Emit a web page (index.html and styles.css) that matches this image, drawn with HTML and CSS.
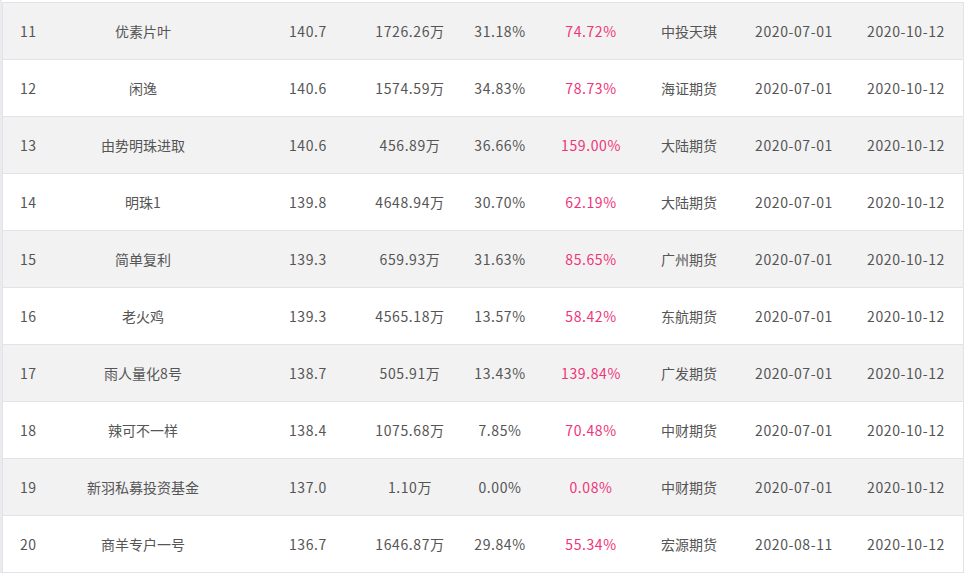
FILE: index.html
```html
<!DOCTYPE html>
<html lang="zh-CN">
<head>
<meta charset="utf-8">
<title>排行</title>
<link rel="stylesheet" href="styles.css">
</head>
<body>
<div class="frame">
  <div class="table">
    <div class="row alt"><span class="c rank">11</span><span class="c">优素片叶</span><span class="c">140.7</span><span class="c">1726.26万</span><span class="c">31.18%</span><span class="c red">74.72%</span><span class="c">中投天琪</span><span class="c">2020-07-01</span><span class="c">2020-10-12</span></div>
    <div class="row"><span class="c rank">12</span><span class="c">闲逸</span><span class="c">140.6</span><span class="c">1574.59万</span><span class="c">34.83%</span><span class="c red">78.73%</span><span class="c">海证期货</span><span class="c">2020-07-01</span><span class="c">2020-10-12</span></div>
    <div class="row alt"><span class="c rank">13</span><span class="c">由势明珠进取</span><span class="c">140.6</span><span class="c">456.89万</span><span class="c">36.66%</span><span class="c red">159.00%</span><span class="c">大陆期货</span><span class="c">2020-07-01</span><span class="c">2020-10-12</span></div>
    <div class="row"><span class="c rank">14</span><span class="c">明珠1</span><span class="c">139.8</span><span class="c">4648.94万</span><span class="c">30.70%</span><span class="c red">62.19%</span><span class="c">大陆期货</span><span class="c">2020-07-01</span><span class="c">2020-10-12</span></div>
    <div class="row alt"><span class="c rank">15</span><span class="c">简单复利</span><span class="c">139.3</span><span class="c">659.93万</span><span class="c">31.63%</span><span class="c red">85.65%</span><span class="c">广州期货</span><span class="c">2020-07-01</span><span class="c">2020-10-12</span></div>
    <div class="row"><span class="c rank">16</span><span class="c">老火鸡</span><span class="c">139.3</span><span class="c">4565.18万</span><span class="c">13.57%</span><span class="c red">58.42%</span><span class="c">东航期货</span><span class="c">2020-07-01</span><span class="c">2020-10-12</span></div>
    <div class="row alt"><span class="c rank">17</span><span class="c">雨人量化8号</span><span class="c">138.7</span><span class="c">505.91万</span><span class="c">13.43%</span><span class="c red">139.84%</span><span class="c">广发期货</span><span class="c">2020-07-01</span><span class="c">2020-10-12</span></div>
    <div class="row"><span class="c rank">18</span><span class="c">辣可不一样</span><span class="c">138.4</span><span class="c">1075.68万</span><span class="c">7.85%</span><span class="c red">70.48%</span><span class="c">中财期货</span><span class="c">2020-07-01</span><span class="c">2020-10-12</span></div>
    <div class="row alt"><span class="c rank">19</span><span class="c">新羽私募投资基金</span><span class="c">137.0</span><span class="c">1.10万</span><span class="c">0.00%</span><span class="c red">0.08%</span><span class="c">中财期货</span><span class="c">2020-07-01</span><span class="c">2020-10-12</span></div>
    <div class="row"><span class="c rank">20</span><span class="c">商羊专户一号</span><span class="c">136.7</span><span class="c">1646.87万</span><span class="c">29.84%</span><span class="c red">55.34%</span><span class="c">宏源期货</span><span class="c">2020-08-11</span><span class="c">2020-10-12</span></div>
  </div>
</div>
</body>
</html>
```
FILE: styles.css
```css
html, body {
  margin: 0;
  padding: 0;
  background: #ffffff;
}
.frame {
  padding: 2px 2px 0 2px;
  background: linear-gradient(to right, #ebebee 0, #ebebee 2px, #ffffff 2px);
}
.table {
  border-top: 1px solid #e2e2e8;
  border-left: 1px solid #e2e2e8;
  border-right: 1px solid #e2e2e8;
  font-family: "Noto Sans CJK SC", "Open Sans", sans-serif;
  font-size: 14px;
  color: #555555;
}
.row {
  display: grid;
  grid-template-columns: 30px 220px 110px 94px 86px 96px 100px 110px 114px;
  height: 56px;
  align-items: center;
  border-bottom: 1px solid #e2e2e8;
  background: #ffffff;
}
.row.alt {
  background: #f2f2f2;
}
.c {
  text-align: center;
  white-space: nowrap;
  line-height: 20px;
  margin-top: -1px;
}
.c:nth-child(1),
.c:nth-child(3),
.c:nth-child(4),
.c:nth-child(5),
.c:nth-child(6),
.c:nth-child(8),
.c:nth-child(9) {
  letter-spacing: 0.6px;
}
.c.rank {
  text-align: left;
  padding-left: 17px;
}
.red {
  color: #f0347a;
}
```
